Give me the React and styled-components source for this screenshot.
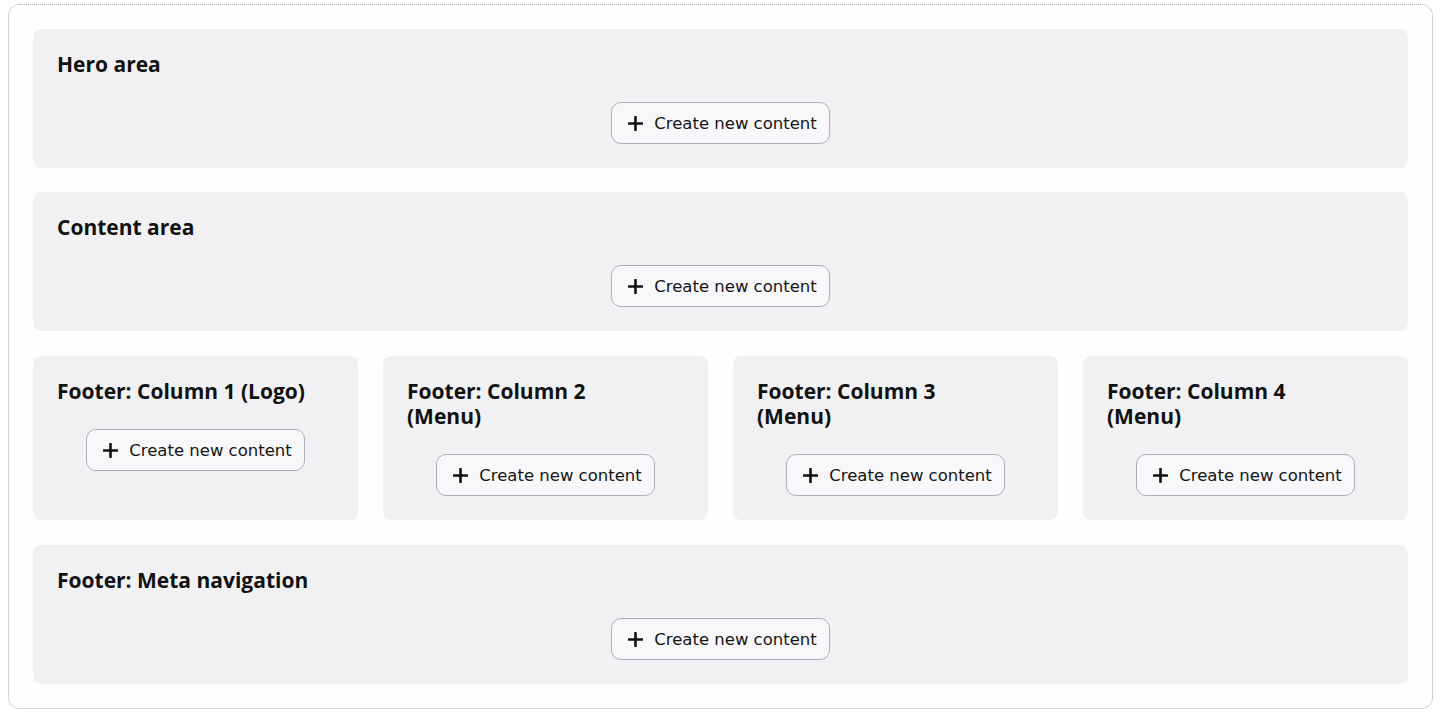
import React from 'react';
import styled, { createGlobalStyle } from 'styled-components';

const GlobalStyle = createGlobalStyle`
  html, body {
    margin: 0;
    padding: 0;
    background: #ffffff;
  }
  body {
    font-family: "Open Sans", "Noto Sans", sans-serif;
    color: #111;
  }
`;

const Page = styled.div`
  padding: 4px 7px 0 8px;
`;

const Layout = styled.div`
  box-sizing: border-box;
  height: 705px;
  border: 1px dotted #a8a8ae;
  border-radius: 12px;
  background: #fefefe;
  padding: 24px;
  display: flex;
  flex-direction: column;
  gap: 24px;
`;

const Columns = styled.div`
  display: grid;
  grid-template-columns: repeat(4, 1fr);
  gap: 25px;
  margin: 1px 0;
`;

const Region = styled.section`
  box-sizing: border-box;
  background: #f1f1f3;
  border-radius: 8px;
  padding: 23px 24px 24px;
  display: flex;
  flex-direction: column;
`;

const Title = styled.h2`
  margin: 0 0 25px;
  padding-right: 24px;
  font-family: "Open Sans", "Noto Sans", sans-serif;
  font-size: 21px;
  line-height: 25px;
  font-weight: 700;
  color: #111;
`;

const CreateButton = styled.button`
  align-self: center;
  box-sizing: border-box;
  height: 42px;
  display: inline-flex;
  align-items: center;
  gap: 11px;
  padding: 0 12px 0 16px;
  border: 1px solid #aeaeb9;
  border-radius: 10px;
  background: #f8f8fa;
  font-family: "DejaVu Sans", Verdana, sans-serif;
  font-size: 16.5px;
  color: #141414;
  cursor: pointer;
`;

const PlusIcon = () => (
  <svg width="15" height="15" viewBox="0 0 15 15" aria-hidden="true">
    <path d="M7.5 1v13M1 7.5h13" stroke="#111" strokeWidth="2.6" strokeLinecap="round" />
  </svg>
);

const Area = ({ title }) => (
  <Region>
    <Title>{title}</Title>
    <CreateButton type="button">
      <PlusIcon />
      Create new content
    </CreateButton>
  </Region>
);

const footerColumns = [
  'Footer: Column 1 (Logo)',
  'Footer: Column 2 (Menu)',
  'Footer: Column 3 (Menu)',
  'Footer: Column 4 (Menu)',
];

export default function App() {
  return (
    <Page>
      <GlobalStyle />
      <Layout>
        <Area title="Hero area" />
        <Area title="Content area" />
        <Columns>
          {footerColumns.map((t) => (
            <Area key={t} title={t} />
          ))}
        </Columns>
        <Area title="Footer: Meta navigation" />
      </Layout>
    </Page>
  );
}
